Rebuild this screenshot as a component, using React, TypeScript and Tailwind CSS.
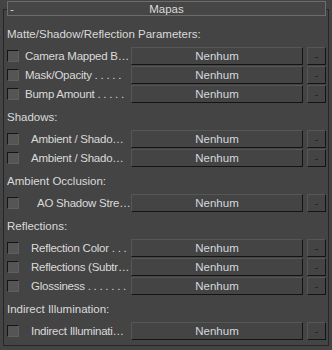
const sections = [
  {
    title: 'Matte/Shadow/Reflection Parameters:',
    first: true,
    rows: [
      { label: 'Camera Mapped B…', pad: 'pl-[6px]' },
      { label: 'Mask/Opacity . . . . .', pad: 'pl-[6px]' },
      { label: 'Bump Amount . . . . .', pad: 'pl-[6px]' },
    ],
  },
  {
    title: 'Shadows:',
    rows: [
      { label: 'Ambient / Shado…', pad: 'pl-[12px]' },
      { label: 'Ambient / Shado…', pad: 'pl-[12px]' },
    ],
  },
  {
    title: 'Ambient Occlusion:',
    rows: [{ label: 'AO Shadow Stre…', pad: 'pl-[18px]' }],
  },
  {
    title: 'Reflections:',
    rows: [
      { label: 'Reflection Color . . .', pad: 'pl-[12px]' },
      { label: 'Reflections (Subtr…', pad: 'pl-[12px]' },
      { label: 'Glossiness . . . . . . .', pad: 'pl-[12px]' },
    ],
  },
  {
    title: 'Indirect Illumination:',
    rows: [{ label: 'Indirect Illuminati…', pad: 'pl-[12px]' }],
  },
];

const MapRow = ({ label, pad }: { label: string; pad: string }) => {
  return (
    <div className="flex items-center h-[18px]">
      <div className="w-[12px] h-[12px] shrink-0 bg-[#555555] border border-t-[#151515] border-l-[#151515] border-b-[#5f5f5f] border-r-[#5f5f5f]" />
      <div className={`w-[112px] shrink-0 whitespace-nowrap tracking-[-0.25px] text-[#dadada] ${pad}`}>
        {label}
      </div>
      <button className="w-[172px] h-[18px] shrink-0 flex items-center justify-center bg-[#444444] border border-t-[#565656] border-l-[#565656] border-b-[#141414] border-r-[#141414] text-[#d4d8de]">
        Nenhum
      </button>
      <button className="ml-[4px] w-[19px] h-[18px] shrink-0 flex items-center justify-center bg-[#444444] border border-t-[#565656] border-l-[#565656] border-b-[#141414] border-r-[#141414] text-[#222222]">
        -
      </button>
    </div>
  );
};

export default function App() {
  return (
    <div
      className="w-[332px] h-[350px] bg-[#444444] pt-[9px] px-[3px] text-[11.5px] leading-[14px]"
      style={{ fontFamily: '"Liberation Sans", Arial, sans-serif' }}
    >
      <div className="h-[337px] border border-[#262626]">
        <div className="-mt-[9px] ml-[3px] mr-[2px] h-[15px] bg-[#464646] border border-[#6c6c6c] flex items-center text-[#dadada] relative">
          <span className="pl-[2px] w-[20px]">-</span>
          <span className="flex-1 text-center pr-[20px]">Mapas</span>
        </div>
        <div className="pl-[3px]">
          {sections.map((s) => (
            <div key={s.title}>
              <div className={`h-[14px] text-[#dadada] whitespace-nowrap ${s.first ? 'mt-[11px]' : 'mt-[7px]'} mb-[6px]`}>
                {s.title}
              </div>
              <div className="flex flex-col gap-[1px]">
                {s.rows.map((r, i) => (
                  <MapRow key={i} label={r.label} pad={r.pad} />
                ))}
              </div>
            </div>
          ))}
        </div>
      </div>
    </div>
  );
}
